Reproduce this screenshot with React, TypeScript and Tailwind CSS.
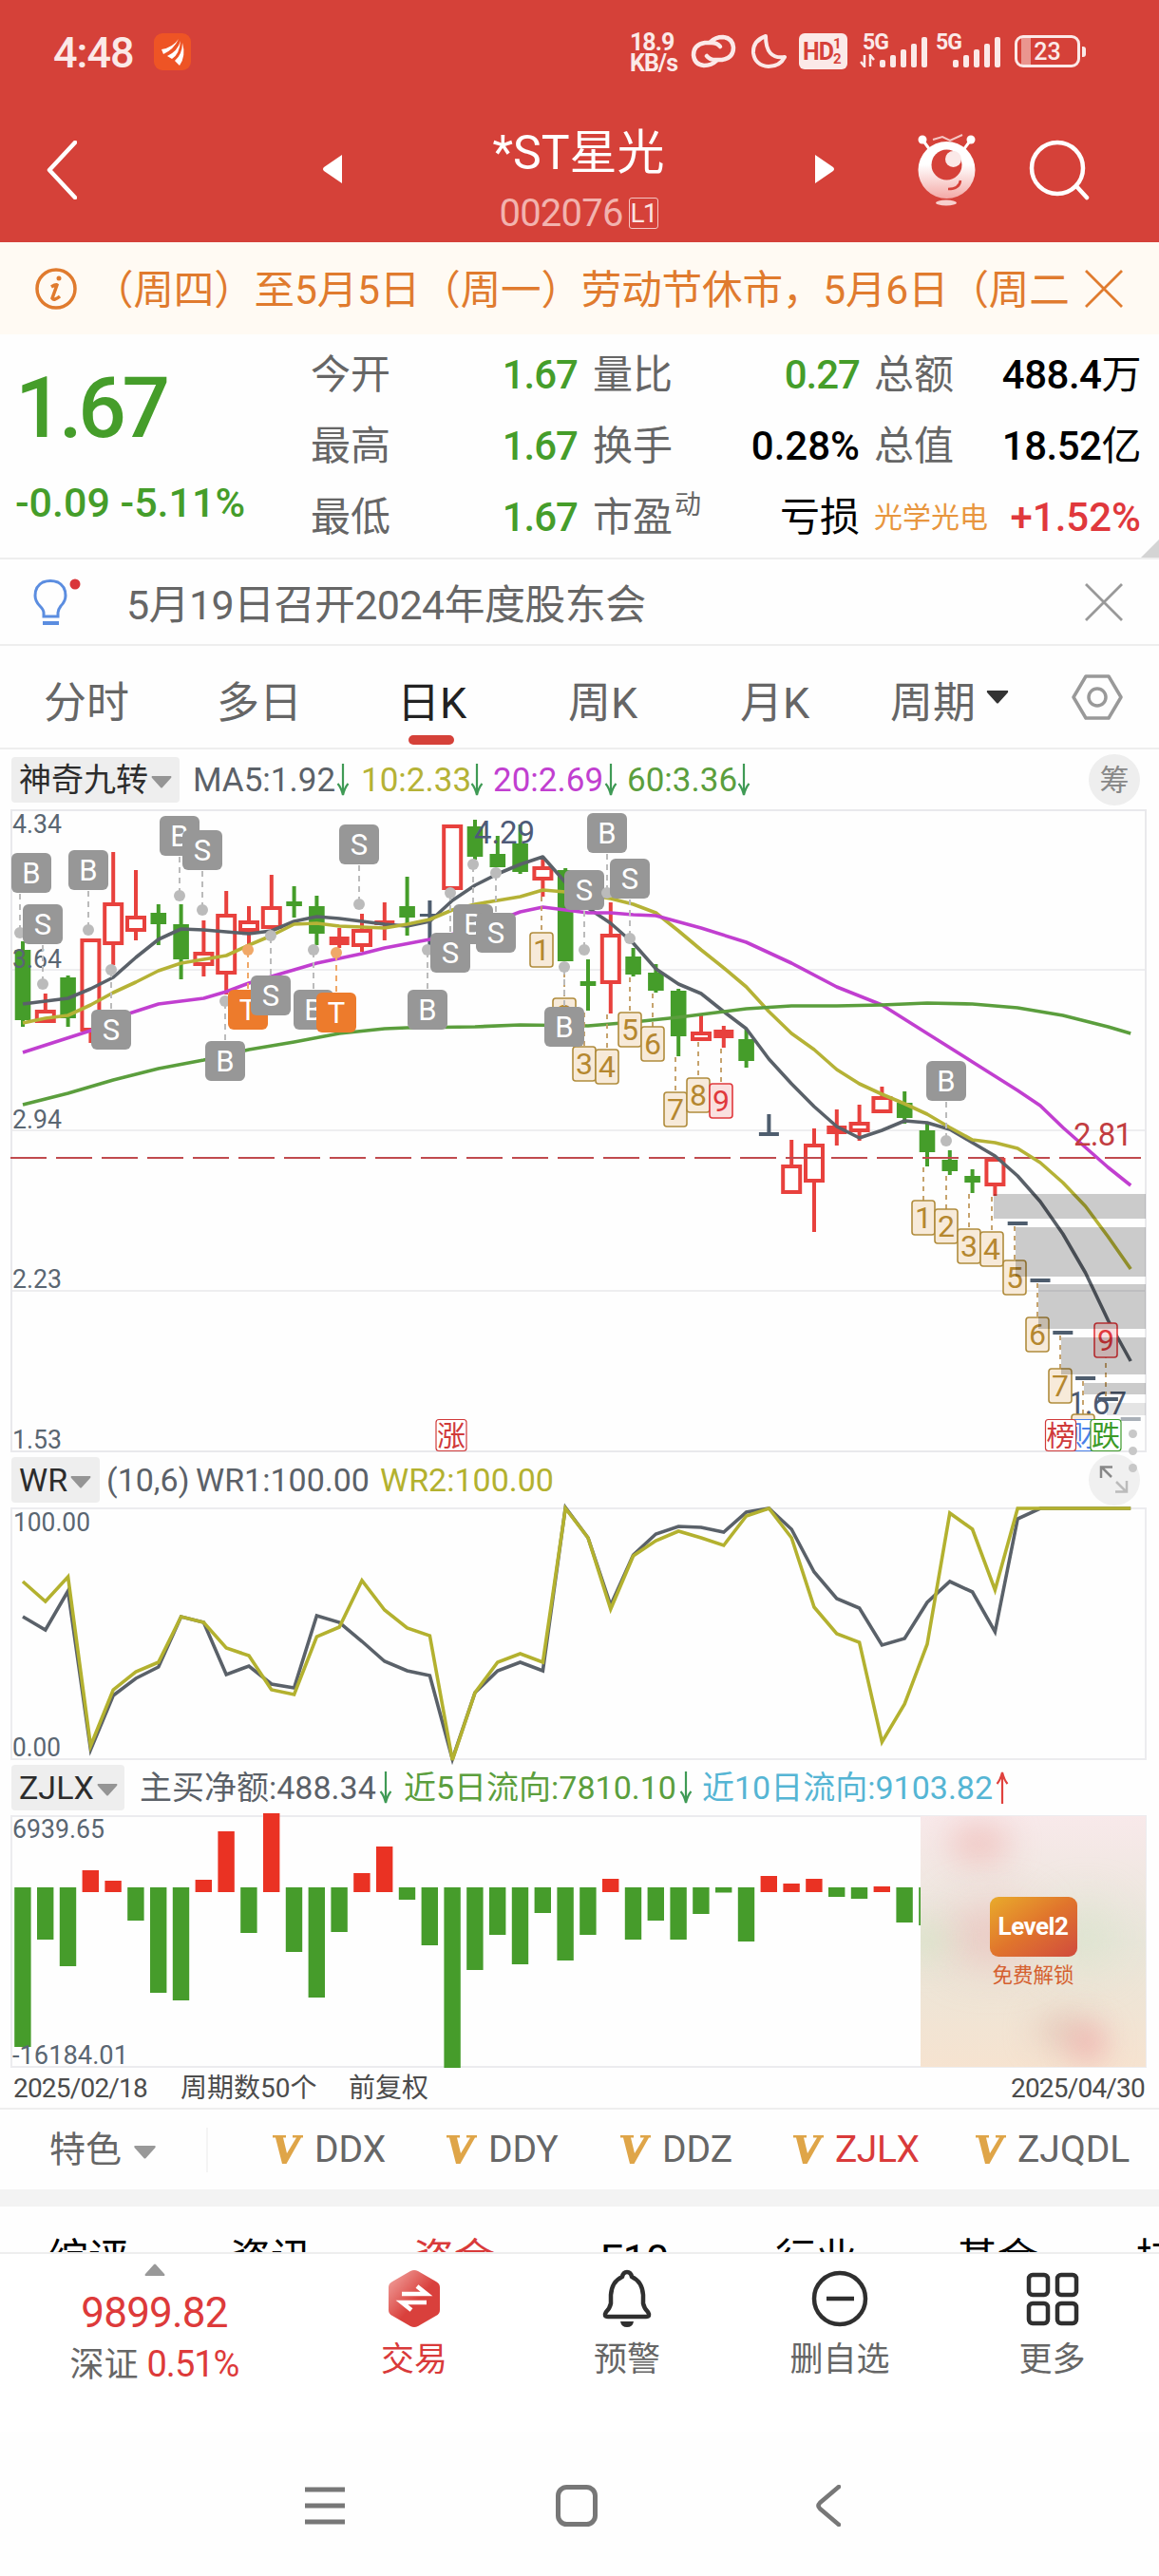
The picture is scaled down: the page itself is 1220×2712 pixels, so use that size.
import { useState } from 'react';

const STEP = 23.8;
const px = (i: number): number => 24 + STEP * i;

// [color, high, bodyTop, bodyBottom, low]
type Candle = [string, number, number, number, number];

const candles: Candle[] = [
  ['g', 991, 1000, 1074, 1081], ['r', 1046, 1063, 1077, 1077], ['g', 1027, 1029, 1072, 1081],
  ['r', 988, 988, 1086, 1098], ['r', 897, 950, 995, 1016], ['r', 916, 964, 981, 990],
  ['g', 952, 961, 973, 995], ['g', 952, 973, 1010, 1031], ['r', 969, 1002, 1017, 1028],
  ['r', 938, 962, 1026, 1047], ['r', 954, 969, 981, 997], ['r', 921, 954, 978, 978],
  ['g', 933, 949, 954, 966], ['g', 943, 954, 983, 995], ['r', 977, 986, 995, 998],
  ['r', 962, 978, 997, 1002], ['r', 950, 969, 974, 990], ['g', 923, 954, 966, 985],
  ['d', 948, 962, 965, 995], ['r', 868, 868, 937, 937], ['g', 863, 870, 902, 905],
  ['g', 880, 899, 913, 913], ['g', 868, 888, 918, 920], ['r', 905, 912, 927, 944],
  ['g', 914, 916, 1012, 1012], ['g', 1010, 1033, 1038, 1064], ['r', 950, 983, 1036, 1067],
  ['g', 998, 1007, 1026, 1028], ['g', 1015, 1024, 1043, 1045], ['g', 1041, 1043, 1091, 1112],
  ['r', 1069, 1086, 1096, 1096], ['r', 1080, 1084, 1093, 1103], ['g', 1084, 1094, 1117, 1124],
  ['d', 1173, 1192, 1196, 1196], ['r', 1200, 1226, 1257, 1257], ['r', 1188, 1204, 1245, 1297],
  ['r', 1168, 1185, 1194, 1206], ['r', 1163, 1181, 1192, 1201], ['r', 1144, 1154, 1172, 1172],
  ['g', 1149, 1161, 1177, 1183], ['g', 1183, 1190, 1213, 1228], ['g', 1211, 1221, 1233, 1237],
  ['g', 1231, 1238, 1245, 1256], ['r', 1218, 1219, 1249, 1259], ['d', 1286, 1286, 1290, 1290],
  ['d', 1346, 1346, 1350, 1350], ['d', 1401, 1401, 1405, 1405], ['d', 1449, 1449, 1453, 1453],
  ['d', 1471, 1471, 1475, 1475], ['f', 1492, 1492, 1496, 1496],
];

const candleColor: Record<string, string> = { g: '#459d2a', r: '#e8413d', d: '#4e5d6e', f: '#a9b0b8' };

type Pt = [number, number];
const ma5: Pt[] = [[0, 1057], [1, 1054], [2, 1051], [3, 1041], [4, 1029], [5, 1008], [6, 989], [7, 978], [8, 979], [9, 981], [10, 983], [11, 980], [12, 970], [13, 965], [14, 967], [15, 970], [16, 973], [17, 975], [18, 970], [19, 948], [20, 932], [21, 920], [22, 910], [23, 902], [24, 929], [25, 956], [26, 972], [27, 993], [28, 1020], [29, 1036], [30, 1046], [31, 1065], [32, 1083], [33, 1115], [34, 1141], [35, 1165], [36, 1186], [37, 1198], [38, 1190], [39, 1180], [40, 1182], [41, 1189], [42, 1203], [43, 1217], [44, 1238], [45, 1265], [46, 1299], [47, 1340], [48, 1390], [49, 1433]];
const ma10: Pt[] = [[0, 1077], [1, 1072], [2, 1069], [3, 1058], [4, 1045], [5, 1034], [6, 1022], [7, 1014], [8, 1010], [9, 1006], [10, 995], [11, 985], [12, 973], [13, 972], [14, 975], [15, 976], [16, 977], [17, 973], [18, 968], [19, 958], [20, 952], [21, 948], [22, 944], [23, 937], [24, 939], [25, 942], [26, 946], [27, 952], [28, 961], [29, 980], [30, 1000], [31, 1019], [32, 1039], [33, 1065], [34, 1088], [35, 1105], [36, 1126], [37, 1141], [38, 1152], [39, 1162], [40, 1173], [41, 1187], [42, 1200], [43, 1203], [44, 1209], [45, 1224], [46, 1245], [47, 1270], [48, 1302], [49, 1336]];
const ma20: Pt[] = [[0, 1108], [3, 1085], [4.7, 1067], [6, 1057], [8, 1051], [9, 1044], [10, 1035], [12, 1021], [13, 1014], [15, 1004], [16, 998], [18, 989], [20, 978], [22, 960], [23, 955], [24, 958], [25, 961], [26, 961], [27, 963], [28, 964], [30, 977], [32, 992], [34, 1014], [36, 1039], [38, 1058], [40, 1088], [42, 1118], [44, 1148], [45, 1164], [46, 1187], [47, 1208], [48, 1229], [49, 1248]];
const ma60: Pt[] = [[0, 1163], [2, 1151], [4, 1137], [6, 1125], [8, 1116], [10, 1105], [12, 1097], [14, 1088], [16, 1083], [17, 1082], [20, 1081], [22, 1079], [25, 1080], [27, 1076], [29, 1071], [31, 1065], [32, 1062], [34, 1059], [36, 1059], [38, 1058], [40, 1056], [42, 1057], [44, 1061], [46, 1069], [48, 1081], [49, 1088]];

const wr1 = [1702, 1716, 1675, 1842, 1785, 1767, 1755, 1702, 1708, 1763, 1754, 1773, 1777, 1701, 1708, 1728, 1749, 1759, 1764, 1852, 1782, 1759, 1750, 1759, 1587, 1619, 1690, 1637, 1615, 1607, 1608, 1613, 1592, 1588, 1610, 1655, 1683, 1693, 1732, 1725, 1687, 1665, 1676, 1718, 1599, 1588, 1588, 1588, 1588, 1588];
const wr2 = [1665, 1686, 1660, 1838, 1779, 1760, 1750, 1702, 1708, 1735, 1743, 1779, 1784, 1723, 1713, 1664, 1695, 1714, 1722, 1853, 1782, 1750, 1741, 1750, 1588, 1619, 1694, 1638, 1622, 1612, 1619, 1627, 1596, 1588, 1619, 1692, 1720, 1729, 1834, 1794, 1731, 1593, 1610, 1674, 1588, 1588, 1588, 1588, 1588, 1588];

// end of every money flow bar, values above the axis are inflow
const flow = [2155, 2042, 2070, 1969, 1980, 2022, 2098, 2106, 1979, 1928, 2035, 1909, 2055, 2103, 2034, 1972, 1944, 2000, 2048, 2177, 2074, 2037, 2068, 2014, 2064, 2037, 1978, 2042, 2022, 2042, 2015, 1992.5, 2044, 1975, 1983, 1978, 1997, 1999, 1986, 2024, 2027];

// [letter, x, badgeY, dotX, dotY]
const marks: [string, number, number, number, number][] = [
  ['B', 33, 919, 21, 982], ['S', 45, 973, 45, 1036], ['B', 93, 916, 93, 979], ['S', 117, 1084, 117, 1021],
  ['B', 189, 880, 189, 943], ['S', 213, 895, 213, 958], ['B', 237, 1117, 237, 1054], ['T', 261, 1063, 261, 1000],
  ['S', 285, 1048, 285, 985], ['B', 330, 1063, 330, 1000], ['T', 354, 1066, 354, 1003], ['S', 378, 889, 378, 952],
  ['B', 450, 1063, 450, 1000], ['B', 498, 973, 498, 910], ['S', 474, 1003, 474, 940], ['S', 522, 982, 522, 919],
  ['B', 594, 1081, 594, 1018], ['S', 615, 937, 615, 1000], ['B', 639, 877, 639, 940], ['S', 663, 925, 663, 988],
  ['B', 996, 1138, 996, 1201],
];

// [digit, x, y, stemStart]
const turns: [number, number, number, number][] = [
  [1, 570, 1000, 944], [2, 594, 1069, 1024], [3, 615, 1120, 1066], [4, 639, 1123, 1068], [5, 663, 1084, 1029],
  [6, 687, 1099, 1046], [7, 711, 1168, 1113], [8, 735, 1153, 1097], [9, 759, 1159, 1104],
  [1, 972, 1282, 1229], [2, 996, 1291, 1238], [3, 1020, 1312, 1257], [4, 1044, 1315, 1260], [5, 1068, 1345, 1291],
  [6, 1092, 1405, 1351], [7, 1116, 1459, 1406], [8, 1140, 1507, 1454], [9, 1164, 1411, 1470],
];

const toPoints = (pts: Pt[]): string => pts.map(([i, y]) => `${px(i)},${y}`).join(' ');
const toLine = (ys: number[]): string => ys.map((y, i) => `${px(i)},${y}`).join(' ');

const AxisText = ({ x = 13, y, w, children }: { x?: number; y: number; w: number; children: string }) => (
  <text x={x} y={y} fontSize="27" fill="#5a6672" textLength={w} lengthAdjust="spacingAndGlyphs">{children}</text>
);

const EventTag = ({ x, color, children }: { x: number; color: string; children: string }) => (
  <g>
    <rect x={x - 16} y={1494.5} width="32" height="33" rx="3" fill="#fff" stroke={color} strokeWidth="1.2" />
    <text x={x} y="1522" fontSize="30" fill={color} textAnchor="middle">{children}</text>
  </g>
);

const KlineChart = () => (
  <svg className="relative z-10 block overflow-visible" width="1220" height="677" viewBox="0 853 1220 677">
    <g stroke="#e9e9ec" strokeWidth="2" fill="none">
      <rect x="12" y="853" width="1194" height="675" />
      <path d="M12 1021H1206M12 1190H1206M12 1359H1206" strokeWidth="1.5" />
    </g>
    {candles.map(([c, high, top, bottom, low], i) => {
      const x = px(i);
      const color = candleColor[c];
      const hollow = c === 'r' && bottom - top > 9;
      return (
        <g key={i} fill={color}>
          <rect x={x - 2} y={high} width="4" height={top - high} />
          <rect x={x - 2} y={bottom} width="4" height={low - bottom} />
          {hollow ? (
            <rect x={x - 9} y={top + 2} width="18" height={bottom - top - 4} fill="#fff" stroke={color} strokeWidth="4" />
          ) : (
            <rect x={x - (c === 'g' ? 8.3 : 10.5)} y={top} width={c === 'g' ? 16.6 : 21} height={bottom - top} />
          )}
        </g>
      );
    })}
    <path d="M11 1219H1206" stroke="#c04a4e" strokeWidth="2.2" strokeDasharray="38 10" />
    <g fill="none" strokeWidth="3.6" strokeLinejoin="round">
      <polyline points={toPoints(ma5)} stroke="#5a6169" />
      <polyline points={toPoints(ma10)} stroke="#b5b236" />
      <polyline points={toPoints(ma20)} stroke="#c13fd0" />
      <polyline points={toPoints(ma60)} stroke="#5b9e3d" />
    </g>
    <AxisText y={877} w={52}>4.34</AxisText>
    <AxisText y={1019} w={52}>3.64</AxisText>
    <AxisText y={1188} w={52}>2.94</AxisText>
    <AxisText y={1356} w={52}>2.23</AxisText>
    <AxisText y={1525} w={52}>1.53</AxisText>
    <g fontSize="33">
      <text x="499" y="888" fill="#4e5a78" textLength="64">4.29</text>
      <text x="1130" y="1206" fill="#c23d41" textLength="62">2.81</text>
      <text x="1124" y="1489" fill="#4e5a70" textLength="62">1.67</text>
    </g>
    {turns.map(([n, x, y, stem], i) => (
      <g key={i}>
        <path d={`M${x} ${stem}V${stem < y ? y - 18 : y + 18}`} stroke="#c09a5e" strokeWidth="1.8" strokeDasharray="5 5" />
        <rect x={x - 12} y={y - 18} width="24" height="36" rx="3" fill={n === 9 ? '#fae0df' : '#f7ead9'} stroke={n === 9 ? '#e0383c' : '#b08c3c'} strokeWidth="1.6" />
        <text x={x} y={y + 11} fontSize="32" textAnchor="middle" fill={n === 9 ? '#e0383c' : '#b5872f'}>{n}</text>
      </g>
    ))}
    <g fillOpacity="0.2">
      <rect x="1046" y="1257" width="160" height="26" />
      <rect x="1069" y="1292" width="137" height="52" />
      <rect x="1093" y="1352" width="113" height="47" />
      <rect x="1117" y="1408" width="89" height="39" />
      <rect x="1141" y="1456" width="65" height="12" />
      <rect x="1165" y="1477" width="41" height="13" fillOpacity="0.1" />
    </g>
    {marks.map(([t, x, y, dx, dy], i) => {
      const soft = t === 'T' ? '#f0a868' : '#bbb';
      return (
        <g key={i}>
          <path d={`M${dx} ${y > dy ? y - 22 : y + 22}V${dy}`} stroke={soft} strokeWidth="2" strokeDasharray="6 5" />
          <circle cx={dx} cy={dy} r="6" fill={soft} />
          <rect x={x - 21} y={y - 21} width="42" height="42" rx="6" fill={t === 'T' ? '#ed7b2c' : '#979797'} />
          <text x={x} y={y + 11} fontSize="31" textAnchor="middle" fill="#fff">{t}</text>
        </g>
      );
    })}
    <EventTag x={475} color="#d03a3a">涨</EventTag>
    <EventTag x={1140} color="#4a80e8">财</EventTag>
    <EventTag x={1116.5} color="#d03a3a">榜</EventTag>
    <EventTag x={1164} color="#3c9a28">跌</EventTag>
    <g fill="#c8c8c8">
      <circle cx="1192.5" cy="1509.5" r="4.5" />
      <circle cx="1192.5" cy="1527.5" r="4.5" />
      <circle cx="1192.5" cy="1545.5" r="4.5" />
    </g>
  </svg>
);

const WrChart = () => (
  <svg className="block overflow-visible" width="1220" height="268" viewBox="0 1586 1220 268">
    <rect x="12" y="1588" width="1194" height="264" fill="none" stroke="#ececef" strokeWidth="2" />
    <AxisText x={14} y={1612} w={81}>100.00</AxisText>
    <AxisText y={1849} w={51}>0.00</AxisText>
    <g fill="none" strokeWidth="3.6">
      <polyline points={toLine(wr1)} stroke="#5a6169" />
      <polyline points={toLine(wr2)} stroke="#b3b12f" />
    </g>
  </svg>
);

const FlowChart = () => (
  <div className="relative h-[268px]">
    <svg className="block overflow-visible" width="1220" height="268" viewBox="0 1910 1220 268">
      <rect x="12" y="1912" width="1194" height="264" fill="none" stroke="#ececef" strokeWidth="2" />
      {flow.map((y, i) => (
        <rect
          key={i}
          x={px(i) - 8.8}
          y={y > 1992 ? 1987 : y}
          width={i === 40 ? 4 : 17.4}
          height={y > 1992 ? y - 1987 : 1992 - y}
          fill={y > 1992 ? '#469c2b' : '#ea3223'}
        />
      ))}
      <AxisText y={1935} w={97}>6939.65</AxisText>
      <AxisText y={2173} w={122}>-16184.01</AxisText>
    </svg>
    <div className="absolute left-[969px] top-[2px] flex h-[264px] w-[237px] flex-col items-center overflow-hidden bg-gradient-to-b from-[#f8e9ea] via-[#e9e6da] to-[#f6e3d0] pt-[85px]">
      <div className="absolute left-[30px] top-[8px] h-[42px] w-[64px] rounded-full bg-[#efb5b0]/60 blur-lg" />
      <div className="absolute left-[30px] top-[95px] h-[60px] w-[90px] rounded-full bg-[#ecb3b0]/60 blur-xl" />
      <div className="absolute left-[-20px] top-[110px] h-[40px] w-[50px] rounded-full bg-[#d3e2c2]/60 blur-lg" />
      <div className="absolute left-[150px] top-[95px] h-[60px] w-[50px] rounded-full bg-[#d5e2c8]/80 blur-xl" />
      <div className="absolute left-[120px] top-[208px] h-[36px] w-[60px] rounded-full bg-[#dfbfb2]/60 blur-lg" />
      <div className="absolute left-[158px] top-[222px] h-[34px] w-[36px] rounded-full bg-[#f09a9e]/70 blur-lg" />
      <div className="relative flex h-[63px] w-[92px] items-center justify-center rounded-[9px] bg-gradient-to-br from-[#e8ab2b] via-[#e0742c] to-[#d04a3c] text-[26px] font-bold tracking-[-0.5px] text-white">
        Level2
      </div>
      <div className="relative mt-[5px] text-[21.5px] leading-[30px] text-[#d5602f]">免费解锁</div>
    </div>
  </div>
);

const Down = ({ className = '' }: { className?: string }) => (
  <svg className={className} width="22" height="13" viewBox="0 0 22 13"><path d="M1 0H21Q22 1 21 2L12 12Q11 13 10 12L1 2Q0 1 1 0Z" fill="currentColor" /></svg>
);

const Trend = ({ up = false }: { up?: boolean }) => (
  <svg className={up ? 'rotate-180 text-[#e0413d]' : 'text-[#3f9a55]'} width="14" height="36" viewBox="0 0 14 36">
    <path d="M7 1V33M1.5 22Q5 26 7 34Q9 26 12.5 22" fill="none" stroke="currentColor" strokeWidth="2.2" />
  </svg>
);

const Pill = ({ width, children }: { width: string; children: string }) => (
  <div className={`ml-[12px] flex h-[48px] items-center rounded-[4px] bg-[#eee] pl-[8px] text-[34px] leading-none text-[#2c2c2c] ${width}`}>
    <span className="whitespace-nowrap">{children}</span>
    <Down className="ml-[3px] mt-[4px] shrink-0 text-[#959595]" />
  </div>
);

const Close = ({ className }: { className: string }) => (
  <svg className={className} width="40" height="40" viewBox="0 0 40 40"><path d="M1 1L39 39M39 1L1 39" stroke="currentColor" strokeWidth="2.8" /></svg>
);

const Signal = () => (
  <svg width="52" height="34" viewBox="0 0 52 34" fill="#fbe9e8">
    <rect x="0" y="25" width="6" height="8" rx="2" /><rect x="11" y="20" width="6" height="13" rx="2" />
    <rect x="22" y="14" width="6" height="19" rx="2" /><rect x="33" y="8" width="6" height="25" rx="2" />
    <rect x="44" y="1" width="6" height="32" rx="2" />
  </svg>
);

const StatusBar = () => (
  <div className="flex h-[108px] items-center text-[#fbe9e8]">
    <span className="ml-[56px] mt-[2px] w-[106px] text-[45px] font-medium leading-none tracking-[-1px]">4:48</span>
    <svg width="39" height="39" viewBox="0 0 39 39">
      <rect width="39" height="39" rx="9" fill="#ee5425" />
      <path d="M8 17Q20 15 26 6Q21 17 10 22ZM14 24Q25 19 28 8Q27 22 19 27ZM22 29Q30 22 30 10Q34 24 27 34Z" fill="#fff" />
    </svg>
    <div className="ml-[462px] mt-[4px] w-[64px] text-[25px] font-bold leading-[22px] tracking-[-1px]">
      <div>18.9</div>
      <div>KB/s</div>
    </div>
    <svg width="48" height="36" viewBox="0 0 48 36" fill="none" stroke="#fbe9e8" strokeWidth="4.5" strokeLinecap="round">
      <path d="M31 13Q28 9 22 9H15Q3 11 3 22Q4 32 14 33Q22 33 27 28" />
      <path d="M17 23Q20 27 26 27H33Q45 25 45 14Q44 4 34 3Q26 3 21 8" />
    </svg>
    <svg className="ml-[15px]" width="39" height="38" viewBox="0 0 39 38" fill="none" stroke="#fbe9e8" strokeWidth="4">
      <path d="M16 3Q2 8 3 21Q5 34 19 35Q31 35 36 25Q16 28 16 3Z" strokeLinejoin="round" />
    </svg>
    <div className="ml-[12px] flex h-[38px] w-[51px] items-center rounded-[6px] bg-[#fbe9e8] pl-[4px] text-[#d54139]">
      <span className="text-[25px] font-bold leading-none tracking-[-1px]">HD</span>
      <span className="text-[15px] font-bold leading-[16px]">1<br />2</span>
    </div>
    <div className="relative ml-[16px] h-[36px] w-[70px]">
      <span className="absolute left-0 top-0 text-[23px] font-bold leading-[18px] tracking-[-1px]">5G</span>
      <svg className="absolute left-[-3px] top-[21px]" width="16" height="14" viewBox="0 0 16 14" fill="none" stroke="#fbe9e8" strokeWidth="2.5"><path d="M5 1V13L1 8M11 13V1L15 6" /></svg>
      <div className="absolute left-[18px] top-[2px]"><Signal /></div>
    </div>
    <div className="relative ml-[7px] h-[36px] w-[70px]">
      <span className="absolute left-0 top-0 text-[23px] font-bold leading-[18px] tracking-[-1px]">5G</span>
      <div className="absolute left-[18px] top-[2px]"><Signal /></div>
    </div>
    <div className="ml-[13px] flex h-[34px] w-[69px] items-center justify-center rounded-[9px] border-[3px] border-[#fbe9e8] bg-[linear-gradient(90deg,#d54139_6%,#ea958f_6%,#ea958f_22%,#d54139_22%)] text-[25px] font-medium leading-none">
      23
    </div>
    <div className="ml-[2px] h-[11px] w-[4px] rounded-r-[3px] bg-[#fbe9e8]" />
  </div>
);

const TitleBar = () => (
  <div className="flex h-[147px] items-center">
    <svg className="ml-[49px] -mt-[6px]" width="32" height="62" viewBox="0 0 32 62"><path d="M30 2L3 31L30 60" fill="none" stroke="#fff" strokeWidth="4.5" strokeLinejoin="round" strokeLinecap="round" /></svg>
    <svg className="ml-[259px] -mt-[8px]" width="20" height="30" viewBox="0 0 20 30"><path d="M20 0V30L1 17Q-1 15 1 13Z" fill="#fff" /></svg>
    <div className="flex flex-1 flex-col items-center pt-[22px]">
      <div className="text-[50px] leading-[56px] text-white">*ST星光</div>
      <div className="mt-[8px] flex items-center">
        <span className="w-[136px] text-[40px] leading-[56px] tracking-[-0.8px] text-[#f2b3ae]">002076</span>
        <span className="flex h-[33px] w-[31px] items-center justify-center rounded-[3px] border-[1.5px] border-[#f5c6c3] text-[28px] leading-none tracking-[-2px] text-[#fbe3e1]">L1</span>
      </div>
    </div>
    <svg className="-mt-[8px]" width="21" height="30" viewBox="0 0 21 30"><path d="M0 0V30L19 17Q21 15 19 13Z" fill="#fff" /></svg>
    <svg className="ml-[87px] -mt-[6px]" width="61" height="76" viewBox="966 141 61 76">
      <defs>
        <linearGradient id="bot" x1="0" y1="0" x2="0" y2="1"><stop offset="0.4" stopColor="#fff" /><stop offset="1" stopColor="#f3a9a6" /></linearGradient>
      </defs>
      <path d="M971 147L979 158M1022 147L1014 158" stroke="#fff" strokeWidth="3" />
      <circle cx="971" cy="147" r="4.5" fill="#fff" />
      <circle cx="1022" cy="147" r="4.5" fill="#fff" />
      <path d="M982 147L992 144L1000 148L1013 142" fill="none" stroke="#f5c6c3" strokeWidth="2" />
      <circle cx="996.5" cy="179" r="30" fill="url(#bot)" />
      <circle cx="996.5" cy="173.5" r="16" fill="#d54139" />
      <circle cx="1003.500" cy="167.500" r="8.500" fill="#fbe9e8" />
      <path d="M998 199Q1010 199 1011 190" fill="none" stroke="#d54139" strokeWidth="2.5" />
      <ellipse cx="996" cy="213.5" rx="11" ry="3" fill="#f7cfcd" />
    </svg>
    <svg className="ml-[56px] mr-[73px] -mt-[6px]" width="64" height="64" viewBox="0 0 64 64" fill="none" stroke="#fff" strokeWidth="4.5" strokeLinecap="round"><circle cx="30" cy="30" r="27" /><path d="M50 49L61 61" /></svg>
  </div>
);

const quotes = [
  ['今开', '1.67', '量比', '0.27', '总额', '488.4万'],
  ['最高', '1.67', '换手', '0.28%', '总值', '18.52亿'],
  ['最低', '1.67', '市盈', '亏损', '光学光电', '+1.52%'],
];

const Quote = () => (
  <div className="relative flex h-[235px] pt-[5px]">
    <div className="w-[327px] pl-[16px] text-[#459d2a]">
      <div className="mt-[21px] text-[89px] font-medium leading-[104px] tracking-[-4.5px]">1.67</div>
      <div className="mt-[22px] whitespace-nowrap text-[43px] font-medium leading-[50px]">-0.09 -5.11%</div>
    </div>
    <div className="flex-1 pr-[19px]">
      {quotes.map((q, row) => (
        <div key={row} className="flex h-[75px] items-center whitespace-nowrap text-[42px] leading-none text-[#666]">
          <span className="w-[120px]">{q[0]}</span>
          <span className="w-[161px] text-right font-medium tracking-[-1px] text-[#459d2a]">{q[1]}</span>
          <span className="flex w-[135px] pl-[16px]">
            {q[2]}
            {row === 2 && <sup className="top-0 -mt-[12px] ml-[2px] text-[28px] leading-[40px]">动</sup>}
          </span>
          <span className={row === 0 ? 'w-[162px] text-right font-medium tracking-[-1px] text-[#459d2a]' : row === 1 ? 'w-[162px] text-right font-medium text-black' : 'w-[162px] text-right text-black'}>{q[3]}</span>
          <span className={row === 2 ? 'ml-[15px] text-[30px] text-[#e8963e]' : 'ml-[15px]'}>{q[4]}</span>
          <span className={row === 2 ? 'ml-auto font-medium text-[#e0383c]' : 'ml-auto font-medium tracking-[-0.5px] text-black'}>
            {q[5].replace(/[万亿]/, '')}
            {row < 2 && <span className="font-normal">{q[5].slice(-1)}</span>}
          </span>
        </div>
      ))}
    </div>
    <div className="absolute bottom-0 right-0 h-[19px] w-[19px] bg-[#d4d4d4] [clip-path:polygon(100%_0,100%_100%,0_100%)]" />
  </div>
);

const periods = [
  { name: '分时', box: 'ml-[46px] w-[182px]' },
  { name: '多日', box: 'w-[190px]' },
  { name: '日K', box: 'w-[180px]' },
  { name: '周K', box: 'w-[181px]' },
  { name: '月K', box: 'w-[158px]' },
  { name: '周期', box: 'w-[100px]' },
];

const Periods = () => {
  const [active, setActive] = useState<string>('日K');
  return (
    <div className="flex h-[109px] items-center border-b-2 border-[#eee] text-[45px] leading-none text-[#666]">
      {periods.map((p) => (
        <button key={p.name} className={`flex h-full flex-col items-start pt-[38px] ${p.box}`} onClick={() => setActive(p.name)}>
          <span className={active === p.name ? 'text-[#222]' : ''}>{p.name}</span>
          {active === p.name && <i className="ml-[12px] mt-[11px] h-[10px] w-[48px] rounded-[5px] bg-[#d54139]" />}
        </button>
      ))}
      <Down className="h-[14px] w-[26px] text-[#333]" />
      <svg className="ml-[65px]" width="54" height="48" viewBox="0 0 54 48" fill="none" stroke="#999" strokeWidth="3.5" strokeLinejoin="round">
        <path d="M15 2H39L52 24L39 46H15L2 24Z" /><circle cx="27" cy="24" r="9" />
      </svg>
    </div>
  );
};

const features = [
  { name: 'DDX', width: 'w-[183px]' },
  { name: 'DDY', width: 'w-[183px]' },
  { name: 'DDZ', width: 'w-[182px]' },
  { name: 'ZJLX', width: 'w-[192px]' },
  { name: 'ZJQDL', width: 'w-[190px]' },
];

const Features = () => (
  <div className="flex h-[84px] items-center whitespace-nowrap text-[39px] leading-none text-[#666]">
    <span className="ml-[52px] w-[88px] text-[38px]">特色</span>
    <Down className="mt-[6px] h-[14px] w-[25px] text-[#999]" />
    <div className="ml-[52px] mr-[68px] h-[47px] w-[2px] bg-[#f4f4f4]" />
    {features.map((f) => (
      <div key={f.name} className={`flex shrink-0 items-center ${f.width}`}>
        <svg width="32" height="30" viewBox="0 0 32 30"><path d="M0 0H14V2.5H11L15 19L25 2.5H21V0H32V2.5H30L14.5 30H10L3 2.5H0Z" fill="#dfa548" /></svg>
        <span className={f.name === 'ZJLX' ? 'ml-[12px] tracking-[-0.5px] text-[#d93a3a]' : 'ml-[12px]'}>{f.name}</span>
      </div>
    ))}
  </div>
);

const sections = [
  { name: '综评', box: 'ml-[50px] w-[192px]' },
  { name: '资讯', box: 'w-[193px]' },
  { name: '资金', box: 'w-[197px] text-[#d93a3a]' },
  { name: 'F10', box: 'w-[184px]' },
  { name: '行业', box: 'w-[191px]' },
  { name: '基金', box: 'w-[189px]' },
  { name: '持', box: 'w-[24px] overflow-hidden' },
];

const BottomBar = () => (
  <div className="flex h-[189px] border-t-2 border-[#eee] bg-white text-[35px] text-[#666]">
    <div className="flex w-[325px] flex-col items-center pt-[10px]">
      <Down className="rotate-180 text-[#999]" />
      <div className="mt-[13px] text-[44px] leading-[52px] tracking-[-0.8px] text-[#dd3a3a]">9899.82</div>
      <div className="mt-[2px] text-[36px] leading-[52px]">深证 <span className="text-[38px] tracking-[-1px] text-[#dd3a3a]">0.51%</span></div>
    </div>
    <div className="flex w-[222px] flex-col items-center pt-[16px]">
      <svg width="56" height="62" viewBox="0 0 56 62">
        <defs><linearGradient id="hex" x1="0" y1="0" x2="1" y2="1"><stop offset="0" stopColor="#f3aaa6" /><stop offset="0.55" stopColor="#d9403c" /><stop offset="1" stopColor="#d9403c" /></linearGradient></defs>
        <path d="M24 2Q28 0 32 2L51 13Q55 15 55 19V43Q55 47 51 49L32 60Q28 62 24 60L5 49Q1 47 1 43V19Q1 15 5 13Z" fill="url(#hex)" />
        <path d="M15 26H41L31 18M41 35H15L25 43" fill="none" stroke="#fff" strokeWidth="4.5" />
      </svg>
      <span className="mt-[12px] leading-[44px] text-[#d93a3a]">交易</span>
    </div>
    <div className="flex w-[226px] flex-col items-center pt-[16px]">
      <svg width="54" height="62" viewBox="0 0 54 62" fill="none" stroke="#2f2f2f" strokeWidth="4.5" strokeLinejoin="round">
        <path d="M27 3Q31 3 32 8Q43 13 44 27V36Q45 41 49 45Q52 50 47 50H7Q2 50 5 45Q9 41 10 36V27Q11 13 22 8Q23 3 27 3Z" />
        <path d="M20 55H34Q33 61 27 61Q21 61 20 55Z" fill="#2f2f2f" stroke="none" />
      </svg>
      <span className="mt-[12px] leading-[44px]">预警</span>
    </div>
    <div className="flex w-[222px] flex-col items-center pt-[16px]">
      <svg width="60" height="62" viewBox="0 0 60 62" fill="none" stroke="#2f2f2f" strokeWidth="4.5"><circle cx="30" cy="31" r="27" /><path d="M16 31H45" /></svg>
      <span className="mt-[12px] leading-[44px]">删自选</span>
    </div>
    <div className="flex flex-1 flex-col items-center pt-[16px]">
      <svg width="56" height="62" viewBox="0 0 56 62" fill="none" stroke="#2f2f2f" strokeWidth="4.5">
        <rect x="3" y="6" width="20" height="21" rx="4" /><rect x="33" y="6" width="20" height="21" rx="4" />
        <rect x="3" y="36" width="20" height="21" rx="4" /><rect x="33" y="36" width="20" height="21" rx="4" />
      </svg>
      <span className="mt-[12px] leading-[44px]">更多</span>
    </div>
  </div>
);

const App = () => {
  return (
    <main className="h-[2712px] w-[1220px] overflow-hidden bg-[#fefefe] font-['Roboto','Noto_Sans_CJK_SC',sans-serif]">
      <header className="bg-[#d54139]">
        <StatusBar />
        <TitleBar />
      </header>

      <div className="flex h-[97px] items-center bg-[#fffaf3] text-[43px] leading-none text-[#e07b2e]">
        <svg className="ml-[37px]" width="44" height="44" viewBox="0 0 44 44" fill="none" stroke="currentColor"><circle cx="22" cy="22" r="20" strokeWidth="3.5" /><path d="M17 20Q22 17 23 18L18 32Q20 35 26 30" strokeWidth="3.5" /><circle cx="25" cy="11" r="2.5" fill="currentColor" stroke="none" /></svg>
        <span className="ml-[20px] w-[1024px] overflow-hidden whitespace-nowrap pt-[2px] text-[42.6px] leading-[60px] tracking-[-0.2px]"><span className="-ml-[3px]">（周四）至5月5日（周一）劳动节休市，5月6日（周二</span></span>
        <Close className="ml-[17px] shrink-0" />
      </div>

      <Quote />

      <div className="flex h-[93px] items-center border-y-2 border-[#eee] text-[43px] leading-none text-[#666]">
        <svg className="ml-[35px]" width="52" height="50" viewBox="35 608 52 50">
          <path d="M46 644Q46 641 42 637Q37 632 37 626Q37 616 45 612Q53 609 61 612Q69 616 69 626Q69 632 64 637Q61 641 61 644V648H46Z" fill="none" stroke="#5b8de0" strokeWidth="3" />
          <path d="M45 655H62" stroke="#5b8de0" strokeWidth="4" />
          <circle cx="79" cy="614" r="5.5" fill="#d9363a" />
        </svg>
        <span className="ml-[46px] w-[1009px] pt-[6px] leading-[60px] tracking-[-0.6px]">5月19日召开2024年度股东会</span>
        <Close className="text-[#999]" />
      </div>

      <Periods />

      <div className="flex h-[64px] items-center whitespace-nowrap text-[35px] leading-none">
        <Pill width="w-[177px]">神奇九转</Pill>
        <span className="ml-[14px] w-[151px] text-[#5b6168]">MA5:1.92</span>
        <Trend />
        <span className="ml-[12px] w-[115px] text-[#b5b236]">10:2.33</span>
        <Trend />
        <span className="ml-[10px] w-[117px] text-[#c13fd0]">20:2.69</span>
        <Trend />
        <span className="ml-[10px] w-[116px] text-[#5b9e3d]">60:3.36</span>
        <Trend />
        <span className="ml-auto mr-[20px] flex h-[54px] w-[54px] items-center justify-center rounded-full bg-[#eee] text-[31px] text-[#888]">筹</span>
      </div>
      <KlineChart />

      <div className="flex h-[56px] items-center whitespace-nowrap text-[34px] leading-none">
        <Pill width="w-[93px]">WR</Pill>
        <span className="ml-[7px] w-[94px] text-[#5b6168]">(10,6)</span>
        <span className="w-[194px] text-[#5b6168]">WR1:100.00</span>
        <span className="text-[#b3b12f]">WR2:100.00</span>
        <svg className="ml-auto mr-[20px]" width="54" height="54" viewBox="0 0 54 54" fill="none">
          <circle cx="27" cy="27" r="27" fill="#f0f0f0" />
          <path d="M24 24L14 14M13 25V13.5H25" stroke="#888" strokeWidth="2.5" />
          <path d="M29 29L39 39M40 28V39.5H28" stroke="#bbb" strokeWidth="2.5" />
        </svg>
      </div>
      <WrChart />

      <div className="flex h-[56px] items-center whitespace-nowrap text-[34px] leading-none text-[#5b6168]">
        <Pill width="w-[119px]">ZJLX</Pill>
        <span className="ml-[16px] w-[252px]">主买净额:488.34</span>
        <Trend />
        <span className="ml-[12px] w-[290px] text-[#5b9e3d]">近5日流向:7810.10</span>
        <Trend />
        <span className="ml-[10px] w-[309px] text-[#55b5d4]">近10日流向:9103.82</span>
        <Trend up />
      </div>
      <FlowChart />

      <div className="flex h-[43px] items-center border-b-2 border-[#eee] pl-[14px] pr-[15px] text-[28px] leading-none text-[#4c4c4c]">
        <span className="w-[176px] tracking-[-0.8px]">2025/02/18</span>
        <span className="w-[177px]">周期数50个</span>
        <span>前复权</span>
        <span className="ml-auto tracking-[-0.8px]">2025/04/30</span>
      </div>
      <Features />
      <div className="h-[18px] bg-[#f3f3f3]" />
      <div className="flex h-[48px] overflow-hidden whitespace-nowrap pt-[29px] text-[43px] leading-[52px] text-black">
        {sections.map((s) => (
          <span key={s.name} className={`shrink-0 ${s.box}`}>{s.name}</span>
        ))}
      </div>
      <BottomBar />

      <nav className="flex h-[152px] items-center pt-[4px]">
        <svg className="ml-[321px]" width="42" height="44" viewBox="0 0 42 44" stroke="#777" strokeWidth="5"><path d="M0 5H42M0 22H42M0 39H42" /></svg>
        <svg className="ml-[222px]" width="44" height="44" viewBox="0 0 44 44"><rect x="2.5" y="2.5" width="39" height="39" rx="9" fill="none" stroke="#777" strokeWidth="5" /></svg>
        <svg className="ml-[229px]" width="27" height="44" viewBox="0 0 27 44"><path d="M25 2L5 19Q2 22 5 25L25 42" fill="none" stroke="#777" strokeWidth="4.5" strokeLinecap="round" /></svg>
      </nav>
    </main>
  );
};

export default App;
